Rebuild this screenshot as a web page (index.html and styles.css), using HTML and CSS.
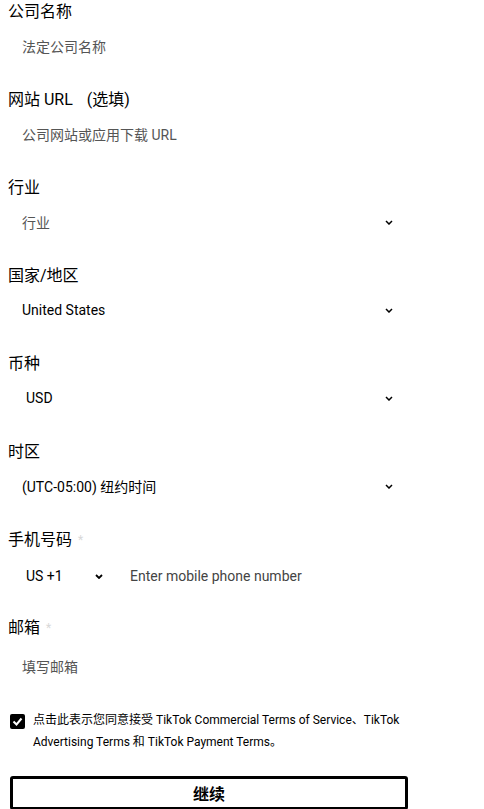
FILE: index.html
```html
<!DOCTYPE html>
<html lang="zh">
<head>
<meta charset="utf-8">
<link rel="stylesheet" href="styles.css">
</head>
<body>
<form class="form">
  <div class="field">
    <div class="label">公司名称</div>
    <div class="input"><span class="ph">法定公司名称</span></div>
  </div>
  <div class="field">
    <div class="label">网站 URL<span class="opt">(选填)</span></div>
    <div class="input"><span class="ph">公司网站或应用下载 URL</span></div>
  </div>
  <div class="field">
    <div class="label">行业</div>
    <div class="input select"><span class="ph">行业</span><svg class="chev" width="8" height="5" viewBox="0 0 8 5"><path d="M1 1l3 3 3-3" fill="none" stroke="#000" stroke-width="1.5"/></svg></div>
  </div>
  <div class="field">
    <div class="label">国家/地区</div>
    <div class="input select"><span class="val">United States</span><svg class="chev" width="8" height="5" viewBox="0 0 8 5"><path d="M1 1l3 3 3-3" fill="none" stroke="#000" stroke-width="1.5"/></svg></div>
  </div>
  <div class="field">
    <div class="label">币种</div>
    <div class="input select indent"><span class="val">USD</span><svg class="chev" width="8" height="5" viewBox="0 0 8 5"><path d="M1 1l3 3 3-3" fill="none" stroke="#000" stroke-width="1.5"/></svg></div>
  </div>
  <div class="field">
    <div class="label">时区</div>
    <div class="input select"><span class="val">(UTC-05:00) 纽约时间</span><svg class="chev" width="8" height="5" viewBox="0 0 8 5"><path d="M1 1l3 3 3-3" fill="none" stroke="#000" stroke-width="1.5"/></svg></div>
  </div>
  <div class="field phone-field">
    <div class="label">手机号码<span class="req">*</span></div>
    <div class="input phone">
      <span class="code">US +1</span>
      <svg class="chev small" width="8" height="5" viewBox="0 0 8 5"><path d="M1 1l3 3 3-3" fill="none" stroke="#000" stroke-width="1.8"/></svg>
      <span class="ph phone-ph">Enter mobile phone number</span>
    </div>
  </div>
  <div class="field email-field">
    <div class="label">邮箱<span class="req">*</span></div>
    <div class="input"><span class="ph">填写邮箱</span></div>
  </div>
  <label class="agree">
    <span class="box"><svg width="11" height="9" viewBox="0 0 11 9"><path d="M1.5 4.5l3 3 5-6" fill="none" stroke="#fff" stroke-width="2"/></svg></span>
    <span class="agree-text">点击此表示您同意接受 TikTok Commercial Terms of Service、TikTok Advertising Terms 和 TikTok Payment Terms。</span>
  </label>
  <button type="button" class="submit">继续</button>
</form>
</body>
</html>
```
FILE: styles.css
```css
* { box-sizing: border-box; }
html, body { margin: 0; padding: 0; background: #fff; }
body {
  font-family: Roboto, "Noto Sans CJK SC", sans-serif;
  color: #000;
  width: 484px;
  height: 809px;
  overflow: hidden;
}
.form { display: flex; flex-direction: column; padding: 0; }
.field { display: flex; flex-direction: column; height: 88px; }
.label {
  font-size: 16px;
  line-height: 24px;
  height: 24px;
  padding-left: 8px;
  display: flex;
  align-items: center;
}
.opt { margin-left: 14px; }
.req { color: #d8d8d8; font-size: 12px; margin-left: 6px; line-height: 1; }
.input {
  margin: 4px 0 0 10px;
  width: 392px;
  height: 36px;
  padding: 0 9px 0 12px;
  display: flex;
  align-items: center;
  font-size: 14px;
}
.select { justify-content: space-between; }
.indent { padding-left: 16px; }
.ph { color: #555; }
.val { color: #000; }
.chev { flex: none; }
.phone-field { height: 88px; }
.phone { height: 40px; padding-left: 16px; }
.code { width: 69px; }
.chev.small { margin-right: 27px; }
.phone-ph { color: #444; }
.email-field { height: 95px; }
.email-field .input { height: 44px; }
.agree {
  display: flex;
  align-items: flex-start;
  gap: 8px;
  margin: 2px 0 0 10px;
  width: 410px;
}
.box {
  flex: none;
  width: 15px;
  height: 15px;
  background: #000;
  border-radius: 2px;
  display: flex;
  align-items: center;
  justify-content: center;
  margin-top: 1px;
}
.agree-text { font-size: 12px; line-height: 22px; margin-top: -4px; }
.submit {
  margin: 23px 0 0 10px;
  width: 398px;
  height: 34px;
  background: #fff;
  border: 3px solid #000;
  border-radius: 3px;
  font-family: "Noto Sans CJK SC", sans-serif;
  font-size: 16px;
  font-weight: 700;
  color: #000;
  padding: 0;
}
```
